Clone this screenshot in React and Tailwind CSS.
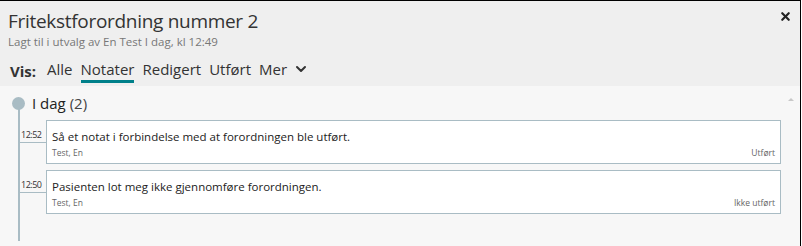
import { X, ChevronDown } from "lucide-react";

const FONT = { fontFamily: '"Open Sans", "Noto Sans", sans-serif' };

const NOTES = [
  { time: "12:52", text: "Så et notat i forbindelse med at forordningen ble utført.", author: "Test, En", status: "Utført" },
  { time: "12:50", text: "Pasienten lot meg ikke gjennomføre forordningen.", author: "Test, En", status: "Ikke utført" },
];

const FILTERS = ["Alle", "Notater", "Redigert", "Utført", "Mer"];

function NoteRow({ note }) {
  return (
    <div className="flex items-stretch">
      <div className="relative w-[27px] shrink-0">
        <span className="absolute left-[2px] top-[10px] text-[9px] leading-none tracking-[-0.5px] text-[#333]">{note.time}</span>
        <span className="absolute left-0 right-0 top-[22px] h-px bg-[#a9bcc4]" />
      </div>
      <div className="flex-1 border border-[#a9bcc4] bg-white px-[5px] pt-[8px] pb-[3px]">
        <div className="text-[11.5px] leading-[15px] text-[#222]">{note.text}</div>
        <div className="mt-[2px] flex justify-between text-[8.5px] leading-[14px] text-[#666]">
          <span>{note.author}</span>
          <span>{note.status}</span>
        </div>
      </div>
    </div>
  );
}

export default function App() {
  return (
    <div className="h-[246px] w-[802px] overflow-hidden" style={FONT}>
      <div className="flex h-full w-[801px] flex-col border-t border-r border-black">
        <header className="relative h-[85px] shrink-0 bg-[#efefef] pl-[8px] pt-[7px]">
          <h1 className="text-[19px] leading-[26px] tracking-[-0.3px] text-[#333]">Fritekstforordning nummer 2</h1>
          <p className="text-[11.5px] leading-[16px] text-[#777]">Lagt til i utvalg av En Test I dag, kl 12:49</p>
          <nav className="mt-[8px] flex items-center gap-[8px] pl-[2px] text-[15px] leading-[22px] text-[#333]">
            <span className="mr-[3px] font-bold">Vis:</span>
            {FILTERS.map((f) => (
              <span
                key={f}
                className={[
                  "flex items-center gap-[6px] border-b-[3px]",
                  f === "Notater" ? "border-[#00808a]" : "border-transparent",
                ].join(" ")}
              >
                {f}
                {f === "Mer" && <ChevronDown size={16} strokeWidth={3} />}
              </span>
            ))}
          </nav>
          <X size={13} strokeWidth={4} className="absolute right-[8px] top-[9px] text-[#222]" />
        </header>

        <main className="relative flex-1 bg-[#f7f7f7] pl-[12px] pr-[19px]">
          <span className="absolute right-[6px] top-[12px] h-0 w-0 border-x-[3px] border-b-[3px] border-x-transparent border-b-[#c8c8c8]" />
          <div className="relative h-full">
            <span className="absolute left-[6px] top-[14px] bottom-[5px] w-[2px] bg-[#a9bcc4]" />
            <div className="flex items-center gap-[7px] pt-[8px]">
              <span className="h-[13px] w-[13px] rounded-full bg-[#a9bcc4]" />
              <span className="text-[15px] leading-[18px] text-[#222]">
                I dag <span className="text-[#444]">(2)</span>
              </span>
            </div>
            <div className="mt-[8px] flex flex-col gap-[6px] pl-[7px]">
              {NOTES.map((n) => (
                <NoteRow key={n.time} note={n} />
              ))}
            </div>
          </div>
        </main>
      </div>
    </div>
  );
}
